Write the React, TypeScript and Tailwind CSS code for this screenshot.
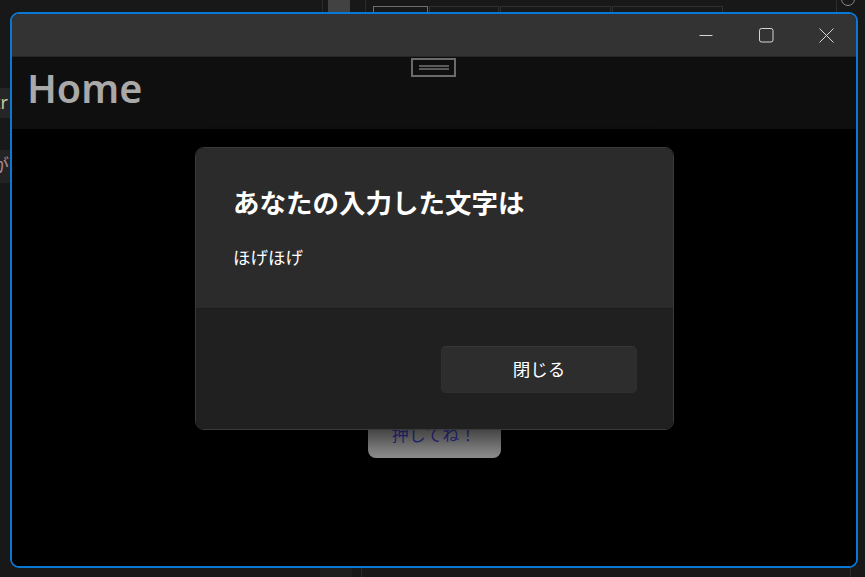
const font = { fontFamily: '"Noto Sans", "Noto Sans CJK JP", sans-serif' }

const TitleButtons = () => {
    return (
        <div className="flex h-full items-center">
            <div className="w-[60px] h-full flex items-center justify-center">
                <svg width="14" height="14" viewBox="0 0 14 14">
                    <line x1="0.5" y1="7.5" x2="13.5" y2="7.5" stroke="#d6d6d6" strokeWidth="1" />
                </svg>
            </div>
            <div className="w-[60px] h-full flex items-center justify-center">
                <svg width="15" height="15" viewBox="0 0 15 15">
                    <rect x="0.5" y="0.5" width="13.5" height="13.5" rx="2" fill="none" stroke="#d6d6d6" strokeWidth="1" />
                </svg>
            </div>
            <div className="w-[60px] h-full flex items-center justify-center">
                <svg width="15" height="15" viewBox="0 0 15 15">
                    <path d="M0.5 0.5 L14.5 14.5 M14.5 0.5 L0.5 14.5" stroke="#d6d6d6" strokeWidth="1" />
                </svg>
            </div>
        </div>
    )
}

// the desktop behind the window (editor chrome peeking out)
const Backdrop = () => {
    return (
        <>
            <div className="absolute left-[322px] top-0 w-[1px] h-[12px] bg-[#2a2a2a]"></div>
            <div className="absolute left-[328px] top-0 w-[22px] h-[12px] bg-[#424242]"></div>
            <div className="absolute left-[365px] top-0 w-[1px] h-[12px] bg-[#2a2a2a]"></div>
            <div className="absolute left-[373px] top-[6px] w-[55px] h-[8px] border border-[#6e6e6e]"></div>
            <div className="absolute left-[429px] top-[6px] w-[70px] h-[8px] border border-[#303030]"></div>
            <div className="absolute left-[500px] top-[6px] w-[111px] h-[8px] border border-[#303030]"></div>
            <div className="absolute left-[612px] top-[6px] w-[111px] h-[8px] border border-[#303030]"></div>
            <div className="absolute left-[836px] top-0 w-[1px] h-[20px] bg-[#2e2e2e]"></div>
            <div className="absolute left-[841px] top-[-8px] w-[14px] h-[14px] rounded-full border border-[#8a8a8a]"></div>
            <div className="absolute left-0 top-[88px] w-[12px] h-[30px] bg-[#262626] overflow-hidden">
                <span className="absolute left-[-6px] top-[2px] text-[18px] leading-[24px] text-[#c8c8a0]" style={font}>tr</span>
            </div>
            <div className="absolute left-0 top-[150px] w-[12px] h-[33px] bg-[#232323] overflow-hidden">
                <span className="absolute left-[-9px] top-[3px] text-[18px] leading-[24px] text-[#b08a90]" style={font}>が</span>
            </div>
            <div className="absolute left-[320px] top-[568px] w-[32px] h-[9px] bg-[#1e1e1e]"></div>
            <div className="absolute left-[361px] top-[568px] w-[1px] h-[9px] bg-[#2a2a2a]"></div>
            <div className="absolute left-[850px] top-[568px] w-[1px] h-[9px] bg-[#2a2a2a]"></div>
        </>
    )
}

const Dialog = () => {
    return (
        <div className="absolute left-[183px] top-[133px] w-[479px] h-[283px] rounded-[9px] border border-[#3a3a3a] overflow-hidden flex flex-col shadow-[0_8px_24px_rgba(0,0,0,0.5)]" style={font}>
            <div className="h-[160px] bg-[#2b2b2b] px-[37px] pt-[38px] flex flex-col">
                <h2 className="text-[26.5px] leading-[34px] font-bold text-white">あなたの入力した文字は</h2>
                <p className="mt-[25px] text-[17.5px] leading-[24px] text-white">ほげほげ</p>
            </div>
            <div className="flex-1 bg-[#202020] border-t border-[#1c1c1c] flex justify-end items-start pt-[37px] pr-[36px]">
                <button className="w-[196px] h-[47px] rounded-[5px] bg-[#2d2d2d] border border-[#303030] border-t-[#363636] text-white text-[17.5px]">閉じる</button>
            </div>
        </div>
    )
}

export default function App() {
    return (
        <div className="relative w-[865px] h-[577px] overflow-hidden bg-[#181818]">
            <Backdrop />
            <div className="absolute left-[10px] top-[12px] w-[848px] h-[556px] rounded-[9px] border-2 border-[#0a78d7] overflow-hidden flex flex-col bg-black">
                <div className="h-[42px] bg-[#333333] flex justify-end shrink-0">
                    <TitleButtons />
                </div>
                <div className="h-[1px] bg-[#262626] shrink-0"></div>
                <div className="relative h-[72px] bg-[#0f0f0f] shrink-0 flex items-center pl-[15px]">
                    <h1 className="text-[39.5px] leading-[48px] font-semibold text-[#a9a9a9] mb-[10px]" style={font}>Home</h1>
                    <div className="absolute left-[399px] top-[1px] w-[45px] h-[19px] border-2 border-[#6a6a6a] flex flex-col justify-center items-center gap-[1px]">
                        <div className="w-[30px] h-[2px] bg-[#5a5a5a]"></div>
                        <div className="w-[30px] h-[2px] bg-[#5a5a5a]"></div>
                    </div>
                </div>
                <div className="relative flex-1 bg-black flex justify-center">
                    <button className="mt-[282px] w-[133px] h-[47px] rounded-[8px] bg-gradient-to-b from-[#5e5e5e] to-[#8e8e8e] text-[#2b2b86] text-[17px]" style={font}>押してね！</button>
                </div>
                <Dialog />
            </div>
        </div>
    )
}
